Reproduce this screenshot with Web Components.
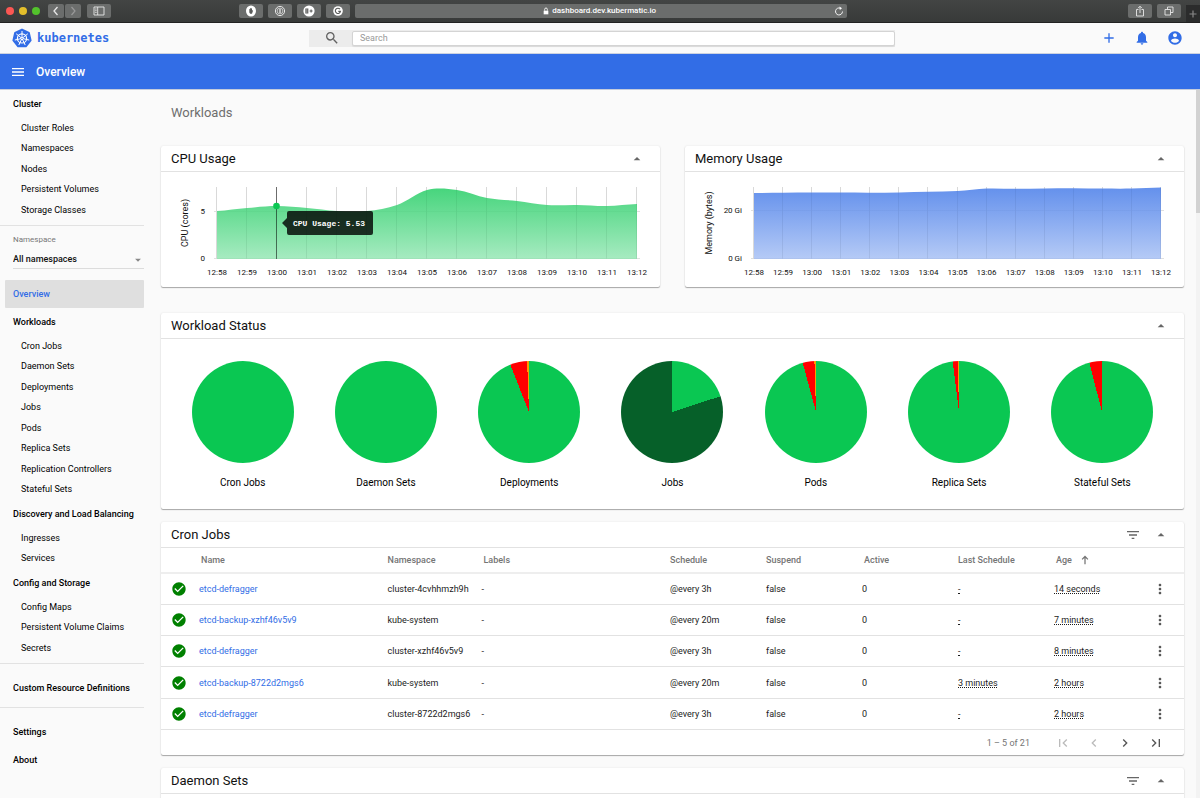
<!DOCTYPE html>
<html lang="en">
<head>
<meta charset="utf-8">
<title>Kubernetes Dashboard</title>
<style>
  html, body { margin: 0; height: 100%; }
  body { font-family: Roboto, "Liberation Sans", sans-serif; background: #fafafa; color: #1c1c1c; overflow: hidden; }
</style>
</head>
<body>
<kd-app></kd-app>
<script>
const icons = {
  back: ['0 0 12 12', '<path d="M7.5 2 4 6l3.5 4" fill="none" stroke="currentColor" stroke-width="1.3"/>'],
  forward: ['0 0 12 12', '<path d="M4.500 2 8 6l-3.500 4" fill="none" stroke="currentColor" stroke-width="1.200"/>'],
  panel: ['0 0 12 12', '<path d="M1 2h10v8H1zM4.700 2v8M2.200 4h1.400M2.200 5.700h1.400M2.200 7.400h1.400" fill="none" stroke="currentColor" stroke-width="0.900"/>'],
  hand: ['0 0 12 12', '<ellipse cx="6" cy="6" rx="5" ry="5.500" fill="#fff"/><path d="M4.300 5.500V4.200q.4-.6.900 0V3.300q.5-.6.900 0v.200q.5-.5.900 0v2q.9-.700 1.100 0L7 8.800H5.200L4.300 7.500z" fill="#5a5b5a"/>'],
  onepw: ['0 0 12 12', '<circle cx="6" cy="6" r="4.600" fill="none" stroke="currentColor"/><circle cx="6" cy="6" r="2.900" fill="none" stroke="currentColor" stroke-width="0.700"/><path d="M6 4v4" stroke="currentColor" stroke-width="1.300"/>'],
  badge: ['0 0 12 12', '<circle cx="6" cy="6" r="5.600" fill="#fff"/><path d="M2.900 4h1.900v4H2.900zM2.900 6h1.900M6.600 6h3M8.100 4.500v3" fill="none" stroke="#5a5b5a" stroke-width="1.100"/>'],
  gram: ['0 0 12 12', '<circle cx="6" cy="6" r="4.800" fill="#fff"/><path d="M8 4.200A2.600 2.600 0 1 0 8.500 6.400H6.300" fill="none" stroke="#5a5b5a" stroke-width="1.100"/>'],
  lock: ['0 0 12 12', '<path d="M2.500 5.500h7V11h-7z" fill="currentColor"/><path d="M4 5.500V3.500a2 2 0 0 1 4 0v2" fill="none" stroke="currentColor" stroke-width="1.300"/>'],
  reload: ['0 0 12 12', '<path d="M9.500 6.500A3.500 3.500 0 1 1 7.300 3.200" fill="none" stroke="currentColor" stroke-width="0.900"/><path d="M6.500 1.400 9 3.200 6.800 5z" fill="currentColor"/>'],
  share: ['0 0 12 12', '<path d="M4.500 4.500H2.500v6.500h7V4.500H7.500M6 8V1.500M4 3.200 6 1.200l2 2" fill="none" stroke="currentColor" stroke-width="0.900"/>'],
  tabs: ['0 0 12 12', '<path d="M2 4.500h5.500V10H2zM4.500 4.500V2H10v5.500H7.500" fill="none" stroke="currentColor" stroke-width="0.900"/>'],
  tabplus: ['0 0 12 12', '<path d="M6 2.500v7M2.500 6h7" stroke="currentColor" stroke-width="1.200"/>'],
  menu: ['0 0 24 24', '<path d="M3 18h18v-2H3v2zm0-5h18v-2H3v2zm0-7v2h18V6H3z"/>'],
  search: ['0 0 24 24', '<path d="M15.500 14h-.79l-.28-.27A6.471 6.471 0 0 0 16 9.500 6.500 6.500 0 1 0 9.500 16c1.610 0 3.090-.59 4.230-1.570l.27.280v.79l5 4.990L20.490 19l-4.990-5zm-6 0C7.010 14 5 11.990 5 9.500S7.010 5 9.500 5 14 7.010 14 9.500 11.990 14 9.500 14z"/>'],
  add: ['0 0 24 24', '<path d="M19 13h-6v6h-2v-6H5v-2h6V5h2v6h6v2z"/>'],
  bell: ['0 0 24 24', '<path d="M12 22c1.100 0 2-.9 2-2h-4c0 1.100.89 2 2 2zm6-6v-5c0-3.070-1.640-5.640-4.500-6.320V4c0-.83-.67-1.500-1.500-1.500s-1.500.67-1.500 1.500v.68C7.630 5.360 6 7.920 6 11v5l-2 2v1h16v-1l-2-2z"/>'],
  person: ['0 0 24 24', '<path d="M12 2C6.480 2 2 6.480 2 12s4.480 10 10 10 10-4.480 10-10S17.520 2 12 2zm0 3c1.660 0 3 1.340 3 3s-1.340 3-3 3-3-1.340-3-3 1.340-3 3-3zm0 14.200c-2.500 0-4.710-1.280-6-3.220.03-1.990 4-3.080 6-3.080 1.990 0 5.970 1.090 6 3.080-1.290 1.940-3.500 3.220-6 3.220z"/>'],
  up: ['0 0 24 24', '<path d="M7 14l5-5 5 5z"/>'],
  down: ['0 0 24 24', '<path d="M7 10l5 5 5-5z"/>'],
  filter: ['0 0 24 24', '<path d="M10 18h4v-2h-4v2zM3 6v2h18V6H3zm3 7h12v-2H6v2z"/>'],
  check: ['0 0 24 24', '<path d="M12 2C6.480 2 2 6.480 2 12s4.480 10 10 10 10-4.480 10-10S17.520 2 12 2zm-2 15l-5-5 1.410-1.410L10 14.170l7.590-7.590L19 8l-9 9z"/>'],
  more: ['0 0 24 24', '<path d="M12 8c1.100 0 2-.9 2-2s-.9-2-2-2-2 .9-2 2 .9 2 2 2zm0 2c-1.100 0-2 .9-2 2s.9 2 2 2 2-.9 2-2-.9-2-2-2zm0 6c-1.100 0-2 .9-2 2s.9 2 2 2 2-.9 2-2-.9-2-2-2z"/>'],
  arrow: ['0 0 12 12', '<path d="M6 11V2M2.500 5.300 6 1.800l3.500 3.500" fill="none" stroke="currentColor" stroke-width="1.500"/>'],
  first: ['0 0 24 24', '<path d="M18.410 16.590L13.820 12l4.590-4.590L17 6l-6 6 6 6zM6 6h2v12H6z"/>'],
  prev: ['0 0 24 24', '<path d="M15.410 7.410L14 6l-6 6 6 6 1.410-1.410L10.830 12z"/>'],
  next: ['0 0 24 24', '<path d="M10 6L8.590 7.410 13.170 12l-4.580 4.590L10 18l6-6z"/>'],
  last: ['0 0 24 24', '<path d="M5.590 7.410L10.180 12l-4.590 4.590L7 18l6-6-6-6zM16 6h2v12h-2z"/>']
};

const base = '*{box-sizing:border-box}button{font:inherit;color:inherit;background:none;border:0;padding:0;margin:0;display:flex;align-items:center;justify-content:center;cursor:pointer}a{color:inherit;text-decoration:none}';

function define(name, css, html) {
  customElements.define(name, class extends HTMLElement {
    constructor() {
      super();
      this.attachShadow({ mode: 'open' });
    }
    connectedCallback() {
      const body = typeof html === 'function' ? html(this) : html;
      this.shadowRoot.innerHTML = '<style>' + base + css + '</style>' + body;
    }
  });
}

define('kd-icon', ':host{display:inline-block;width:var(--size,16px);height:var(--size,16px);flex:none}svg{display:block;width:100%;height:100%;fill:currentColor}', el => {
  const [box, art] = icons[el.getAttribute('name')];
  return `<svg viewBox="${box}" aria-hidden="true">${art}</svg>`;
});

/* Browser window toolbar */
define('browser-bar', `
  :host{display:flex;align-items:center;height:23px;padding:0 0 1px 6px;background:linear-gradient(#434544,#383a39);border-bottom:1px solid #222;color:#e8e8e8;--size:12px}
  .lights{display:flex;gap:5px;margin-right:8px}
  .lights i{width:8px;height:8px;border-radius:50%}
  button,.url{height:14px;border-radius:2px;background:#6b6d6c}
  button{width:24px;flex:none}
  .nav{display:flex;gap:1px;margin-right:6px}.nav button{width:16px}.nav button+button{color:#999}
  .ext{display:flex;gap:5px;margin-right:5px}
  .a{flex:130 1 0}.b{flex:285 1 0}
  .url{flex:488 1 0;display:flex;align-items:center;font-size:8px;font-weight:500;padding:0 2px 0 10px;color:#fff}
  .url span{flex:1;display:flex;justify-content:center;align-items:center;gap:2px}
  .url span kd-icon{--size:8px}
  .new{width:14px;height:17px;background:#2b2c2c;align-self:flex-end;border-radius:0;color:#888;margin-bottom:-1px}`, `
  <div class="lights"><i style="background:#fc5753"></i><i style="background:#e4bf2b"></i><i style="background:#53c22c"></i></div>
  <div class="nav"><button aria-label="Back"><kd-icon name="back"></kd-icon></button><button aria-label="Forward"><kd-icon name="forward"></kd-icon></button></div>
  <button aria-label="Sidebar"><kd-icon name="panel"></kd-icon></button>
  <div class="a"></div>
  <div class="ext"><button aria-label="Blocker"><kd-icon name="hand"></kd-icon></button><button aria-label="Passwords"><kd-icon name="onepw"></kd-icon></button><button aria-label="Extension"><kd-icon name="badge"></kd-icon></button><button aria-label="Grammar"><kd-icon name="gram"></kd-icon></button></div>
  <div class="url"><span><kd-icon name="lock"></kd-icon>dashboard.dev.kubermatic.io</span><kd-icon name="reload"></kd-icon></div>
  <div class="b"></div>
  <div class="ext"><button aria-label="Share"><kd-icon name="share"></kd-icon></button><button aria-label="Tabs"><kd-icon name="tabs"></kd-icon></button></div>
  <button class="new" aria-label="New tab"><kd-icon name="tabplus"></kd-icon></button>`);

define('kd-logo', ':host{display:block;width:20px;height:20px}svg{display:block}', () => {
  let spokes = '', hull = [];
  for (let i = 0; i < 7; i++) {
    const a = -Math.PI / 2 + i * 2 * Math.PI / 7;
    hull.push((50 + 44 * Math.cos(a)).toFixed(1) + ',' + (52 + 44 * Math.sin(a)).toFixed(1));
    spokes += `<path d="M50 52L${(50 + 35 * Math.cos(a)).toFixed(1)} ${(52 + 35 * Math.sin(a)).toFixed(1)}"/>`;
  }
  return `<svg viewBox="0 0 100 100" width="20" height="20"><polygon points="${hull.join(' ')}" fill="#326de6" stroke="#326de6" stroke-width="10" stroke-linejoin="round"/>
    <g stroke="#fff" stroke-width="5" stroke-linecap="round" fill="none"><circle cx="50" cy="52" r="23" stroke-width="6"/>${spokes}</g><circle cx="50" cy="52" r="7" fill="#fff"/><circle cx="50" cy="52" r="3" fill="#326de6"/></svg>`;
});

define('kd-header', `
  :host{display:grid;grid-template-columns:297px minmax(0,1fr) 305px;align-items:center;height:31px;padding-left:12px;background:#fafafa;border-bottom:1px solid #ccd2e0}
  .brand{display:flex;align-items:center;gap:5px;color:#326de6;font:bold 12px/20px "DejaVu Sans Mono","Liberation Mono",monospace}
  .search{display:flex;height:17px;background:#ececec;align-items:center}
  .search button{width:43px;--size:16px;color:#616161;padding-left:3px}
  input{flex:1;min-width:0;height:15px;border:1px solid #d4d4d4;border-radius:2px;background:#fff;font:9px Roboto,sans-serif;padding:0 7px;outline:0;box-shadow:0 1px 1px rgba(0,0,0,.08)}
  input::placeholder{color:#999}
  .tools{display:flex;justify-content:flex-end;gap:17px;padding-right:17px;color:#326de6}`, `
  <a class="brand" href="#"><kd-logo></kd-logo>kubernetes</a>
  <div class="search"><button aria-label="Submit search"><kd-icon name="search"></kd-icon></button><input type="text" placeholder="Search" aria-label="Search"></div>
  <div class="tools"><button aria-label="Create"><kd-icon name="add"></kd-icon></button><button aria-label="Notifications"><kd-icon name="bell"></kd-icon></button><button aria-label="Account"><kd-icon name="person"></kd-icon></button></div>`);

define('kd-toolbar', `
  :host{display:flex;align-items:center;gap:10px;height:36px;padding-left:10px;background:#326de6;color:#fff;border-bottom:1px solid #c4cbdc}
  h1{margin:0;font-size:12px;line-height:16px;font-weight:500}`, `
  <button aria-label="Toggle navigation"><kd-icon name="menu"></kd-icon></button><h1><slot></slot></h1>`);

define('kd-nav-group', `
  :host{display:block}
  h2{margin:0;padding-left:13px;font-size:9px;line-height:28px;font-weight:500;color:#000}
  ul{list-style:none;margin:0;padding:0}
  li{padding-left:21px;font-size:9px;line-height:20px}
  li:nth-child(even){padding-bottom:1px}`, el =>
  `<h2><a href="#">${el.getAttribute('label')}</a></h2><ul>${(el.getAttribute('items') || '').split(',').filter(Boolean).map(t => `<li><a href="#">${t}</a></li>`).join('')}</ul>`);

define('kd-nav', `
  :host{display:block;width:144px;flex:none;color:#000}
  hr{border:0;border-top:1px solid #e2e2e2;margin:5px 0 0}
  .ns{padding:8px 0 0 13px}
  label{display:block;font-size:8px;line-height:12px;color:#777}
  .pick{position:relative;border-bottom:1px solid #dcdcdc;padding-top:4px}
  select{appearance:none;display:block;width:100%;border:0;background:none;padding:0;margin:0;font:500 9px/18px Roboto,sans-serif;height:18px;color:#111}
  .pick kd-icon{position:absolute;right:-1px;bottom:1px;--size:14px;color:#888;pointer-events:none}
  .active{display:block;margin:11px 0 0 5px;padding-left:8px;background:#dfdfdf;border-radius:1px;color:#326de6;font-size:9px;line-height:28px;font-weight:500}
  .tail{padding-top:10px}`, `
  <nav>
  <kd-nav-group label="Cluster" items="Cluster Roles,Namespaces,Nodes,Persistent Volumes,Storage Classes"></kd-nav-group>
  <hr>
  <div class="ns"><label for="ns">Namespace</label><div class="pick"><select id="ns"><option>All namespaces</option></select><kd-icon name="down"></kd-icon></div></div>
  <a class="active" href="#">Overview</a>
  <kd-nav-group label="Workloads" items="Cron Jobs,Daemon Sets,Deployments,Jobs,Pods,Replica Sets,Replication Controllers,Stateful Sets"></kd-nav-group>
  <kd-nav-group label="Discovery and Load Balancing" items="Ingresses,Services"></kd-nav-group>
  <kd-nav-group label="Config and Storage" items="Config Maps,Persistent Volume Claims,Secrets"></kd-nav-group>
  <hr>
  <kd-nav-group class="tail" label="Custom Resource Definitions"></kd-nav-group>
  <hr>
  <kd-nav-group class="tail" label="Settings"></kd-nav-group>
  <kd-nav-group label="About"></kd-nav-group>
  </nav>`);

define('kd-card', `
  :host{display:block;background:#fff;border-radius:2px;box-shadow:0 1px 1px rgba(0,0,0,.32),0 0 2px rgba(0,0,0,.1)}
  header{display:flex;align-items:center;height:26px;padding:0 15px 0 10px;border-bottom:1px solid #e2e2e2}
  h3{flex:1;margin:0;font-size:13px;line-height:25px;font-weight:400;color:#111}
  .tools{display:flex;gap:12px;color:#666}`, el => `
  <header><h3>${el.getAttribute('label')}</h3><div class="tools">${el.hasAttribute('filter') ? '<button aria-label="Filter"><kd-icon name="filter"></kd-icon></button>' : ''}<button aria-label="Collapse"><kd-icon name="up"></kd-icon></button></div></header><slot></slot>`);

define('kd-area-chart', `
  :host{display:block}svg{display:block;width:100%;height:auto}
  text{font-family:Roboto,sans-serif;font-size:8px;fill:#111}.axis{font-size:9px}
  .tip{font:bold 8px "Liberation Mono",monospace;fill:#fff}`, el => {
  const x0 = +el.getAttribute('start'), x1 = 476, step = (x1 - x0) / 14;
  const ys = el.getAttribute('values').split(',').map(Number);
  const pts = ys.map((y, i) => [x0 + i * step, y]);
  let curve = `M${pts[0]}`;
  for (let i = 0; i < 14; i++) {
    const s0 = ((ys[i + 1] - (ys[i - 1] ?? ys[i])) / 2), s1 = (((ys[i + 2] ?? ys[i + 1]) - ys[i]) / 2);
    curve += `C${pts[i][0] + step / 3} ${ys[i] + s0 / 3} ${pts[i + 1][0] - step / 3} ${ys[i + 1] - s1 / 3} ${pts[i + 1]}`;
  }
  const tint = el.getAttribute('tint'), tick = +el.getAttribute('tick'), unit = el.getAttribute('unit') || '';
  const times = ['12:58', '12:59', ...Array.from({ length: 13 }, (_, i) => '13:' + String(i).padStart(2, '0'))];
  const grid = pts.map(p => `M${Math.round(p[0]) - .5} 15V87`).join('');
  const tip = el.getAttribute('tip');
  const px = Math.round(pts[2][0]) - .5;
  return `<svg viewBox="0 0 499 115" role="img" aria-label="${el.getAttribute('axis')}">
    <defs><linearGradient id="g" x1="0" x2="0" y1="15" y2="87" gradientUnits="userSpaceOnUse"><stop offset="0" stop-color="${tint}" stop-opacity=".76"/><stop offset="1" stop-color="${tint}" stop-opacity=".36"/></linearGradient></defs>
    <path d="${grid}M${x0 - 3} ${tick + .5}H479M${x0 - 3} 86.5H479" stroke="#e0e0e0" fill="none"/>
    <path d="${curve}V87H${x0}Z" fill="#fff" opacity=".6"/>
    <path d="${curve}V87H${x0}Z" fill="url(#g)"/>
    <path d="${grid}" stroke="#000" opacity=".03" fill="none"/>
    <text class="axis" text-anchor="middle" transform="translate(${x0 - 29 - (unit ? 13 : 0)} 51) rotate(-90)">${el.getAttribute('axis')}</text>
    <text x="${x0 - 12}" y="${tick + 3}" text-anchor="end">${unit ? '20' : '5'}${unit}</text><text x="${x0 - 12}" y="89" text-anchor="end">0${unit}</text>
    ${pts.map((p, i) => `<text x="${p[0]}" y="103" text-anchor="middle">${times[i]}</text>`).join('')}
    ${tip ? `<path d="M${px} 15V87" stroke="#000" stroke-opacity=".5"/><circle cx="${px}" cy="34" r="3.3" fill="#0ac752"/>
    <path d="M121 51l5-5v-5q0-2 2-2h82q2 0 2 2v20q0 2-2 2h-82q-2 0-2-2v-5z" fill="#000" fill-opacity=".8"/><text class="tip" x="132" y="54">${tip}</text>` : ''}
  </svg>`;
});

/* Slices are "colour:percent" pairs, clockwise from twelve o'clock */
define('kd-pie', `
  :host{display:flex;flex-direction:column;align-items:center;gap:12px;font-size:10px;line-height:16px;color:#000}
  .disc{width:102px;height:102px;border-radius:50%}`, el => {
  let at = 0;
  const stops = el.getAttribute('slices').split(',').map(s => {
    const [c, p] = s.split(':'), from = at;
    at += +p;
    return `${c} ${from}% ${at}%`;
  });
  return `<div class="disc" style="background:conic-gradient(${stops.join(',')})"></div><span>${el.getAttribute('label')}</span>`;
});

const jobs = [
  ['etcd-defragger', 'cluster-4cvhhmzh9h', '@every 3h', '-', '14 seconds'],
  ['etcd-backup-xzhf46v5v9', 'kube-system', '@every 20m', '-', '7 minutes'],
  ['etcd-defragger', 'cluster-xzhf46v5v9', '@every 3h', '-', '8 minutes'],
  ['etcd-backup-8722d2mgs6', 'kube-system', '@every 20m', '3 minutes', '2 hours'],
  ['etcd-defragger', 'cluster-8722d2mgs6', '@every 3h', '-', '2 hours']
];

define('kd-job-table', `
  :host{display:block;font-size:9px}
  table{width:100%;table-layout:fixed;border-collapse:separate;border-spacing:0}
  th,td{padding:0;text-align:left;white-space:nowrap;border-bottom:1px solid #e2e2e2;height:31px}
  tr:nth-child(4n) td{height:32px}
  th{height:26px;font-weight:500;color:#757575}
  thead th{border-bottom:2px solid #eee}
  th.sort{padding-left:2px}
  th span{display:flex;align-items:center;gap:8px;--size:10px}
  td:first-child{padding-left:10px;color:#008000}
  kd-icon{vertical-align:middle}
  td a{color:#326de6}
  u{text-decoration:underline dotted;text-underline-offset:1px}
  td button{color:#555;margin-left:2px}
  .i{width:38px}.n{width:94px}.c{width:96px}.m{width:34px}
  footer{display:flex;align-items:center;justify-content:flex-end;height:25px;padding-right:20px;color:#757575}
  footer button{color:#555;margin-left:15px}footer button:disabled{color:#bbb}
  footer span{margin-right:10px}`, () => `
  <table><colgroup><col class="i"><col><col class="n"><col><col class="c"><col class="c"><col class="c"><col class="c"><col class="c"><col class="m"></colgroup>
  <thead><tr><th></th><th class="sort">Name</th><th>Namespace</th><th class="sort">Labels</th><th>Schedule</th><th>Suspend</th><th class="sort">Active</th><th>Last Schedule</th><th class="sort"><span>Age<kd-icon name="arrow"></kd-icon></span></th><th></th></tr></thead>
  <tbody>${jobs.map(j => `<tr><td><kd-icon name="check"></kd-icon></td><td><a href="#">${j[0]}</a></td><td>${j[1]}</td><td>-</td><td>${j[2]}</td><td>false</td><td>0</td><td><u>${j[3]}</u></td><td><u>${j[4]}</u></td><td><button aria-label="Actions"><kd-icon name="more"></kd-icon></button></td></tr>`).join('')}</tbody></table>
  <footer><span>1 – 5 of 21</span><button disabled aria-label="First page"><kd-icon name="first"></kd-icon></button><button disabled aria-label="Previous page"><kd-icon name="prev"></kd-icon></button><button aria-label="Next page"><kd-icon name="next"></kd-icon></button><button aria-label="Last page"><kd-icon name="last"></kd-icon></button></footer>`);

define('kd-app', `
  :host{display:flex;flex-direction:column;height:100vh;overflow:hidden}
  .view{display:flex;flex:1;min-height:0;overflow:hidden}
  main{flex:1;min-width:0;padding:0 12px 0 17px}
  h2{margin:0;padding:13px 10px 23px;font-size:13px;line-height:20px;font-weight:400;color:#6e6e6e}
  .pair{display:grid;grid-template-columns:1fr 1fr;gap:25px;margin-bottom:26px}
  .pies{display:grid;grid-template-columns:repeat(7,1fr);padding:22px 10px 18px}
  .stack{display:grid;gap:13px}
  .bar{width:4px;flex:none;background:#f3f3f3}.bar i{display:block;height:123px;background:#d2d2d2}
  .rest{height:40px}`, `
  <browser-bar></browser-bar>
  <kd-header></kd-header>
  <kd-toolbar>Overview</kd-toolbar>
  <div class="view">
    <kd-nav></kd-nav>
    <main>
      <h2>Workloads</h2>
      <div class="pair">
        <kd-card label="CPU Usage"><kd-area-chart start="56" tick="39" axis="CPU (cores)" tint="#0ac752" tip="CPU Usage: 5.53" values="39,36,34,36,39,39,33,18,18,26,29,33,33,34,32"></kd-area-chart></kd-card>
        <kd-card label="Memory Usage"><kd-area-chart start="69" tick="38" unit=" Gi" axis="Memory (bytes)" tint="#326de6" values="21,20.7,20.5,20.6,20.8,20.4,19.8,19,16.5,16.8,16.4,16.2,16.6,16.6,15.5"></kd-area-chart></kd-card>
      </div>
      <div class="stack">
        <kd-card label="Workload Status"><div class="pies">
          <kd-pie label="Cron Jobs" slices="#0ac752:100"></kd-pie>
          <kd-pie label="Daemon Sets" slices="#0ac752:100"></kd-pie>
          <kd-pie label="Deployments" slices="#0ac752:94,#f00:5.400,#f90:0.600"></kd-pie>
          <kd-pie label="Jobs" slices="#0ac752:20,#066029:80"></kd-pie>
          <kd-pie label="Pods" slices="#0ac752:95.800,#f00:3.700,#f90:0.500"></kd-pie>
          <kd-pie label="Replica Sets" slices="#0ac752:98,#f00:1.600,#f90:0.400"></kd-pie>
          <kd-pie label="Stateful Sets" slices="#0ac752:96,#f00:4"></kd-pie>
        </div></kd-card>
        <kd-card label="Cron Jobs" filter><kd-job-table></kd-job-table></kd-card>
        <kd-card label="Daemon Sets" filter><div class="rest"></div></kd-card>
      </div>
    </main>
    <div class="bar"><i></i></div>
  </div>`);
</script>
</body>
</html>
